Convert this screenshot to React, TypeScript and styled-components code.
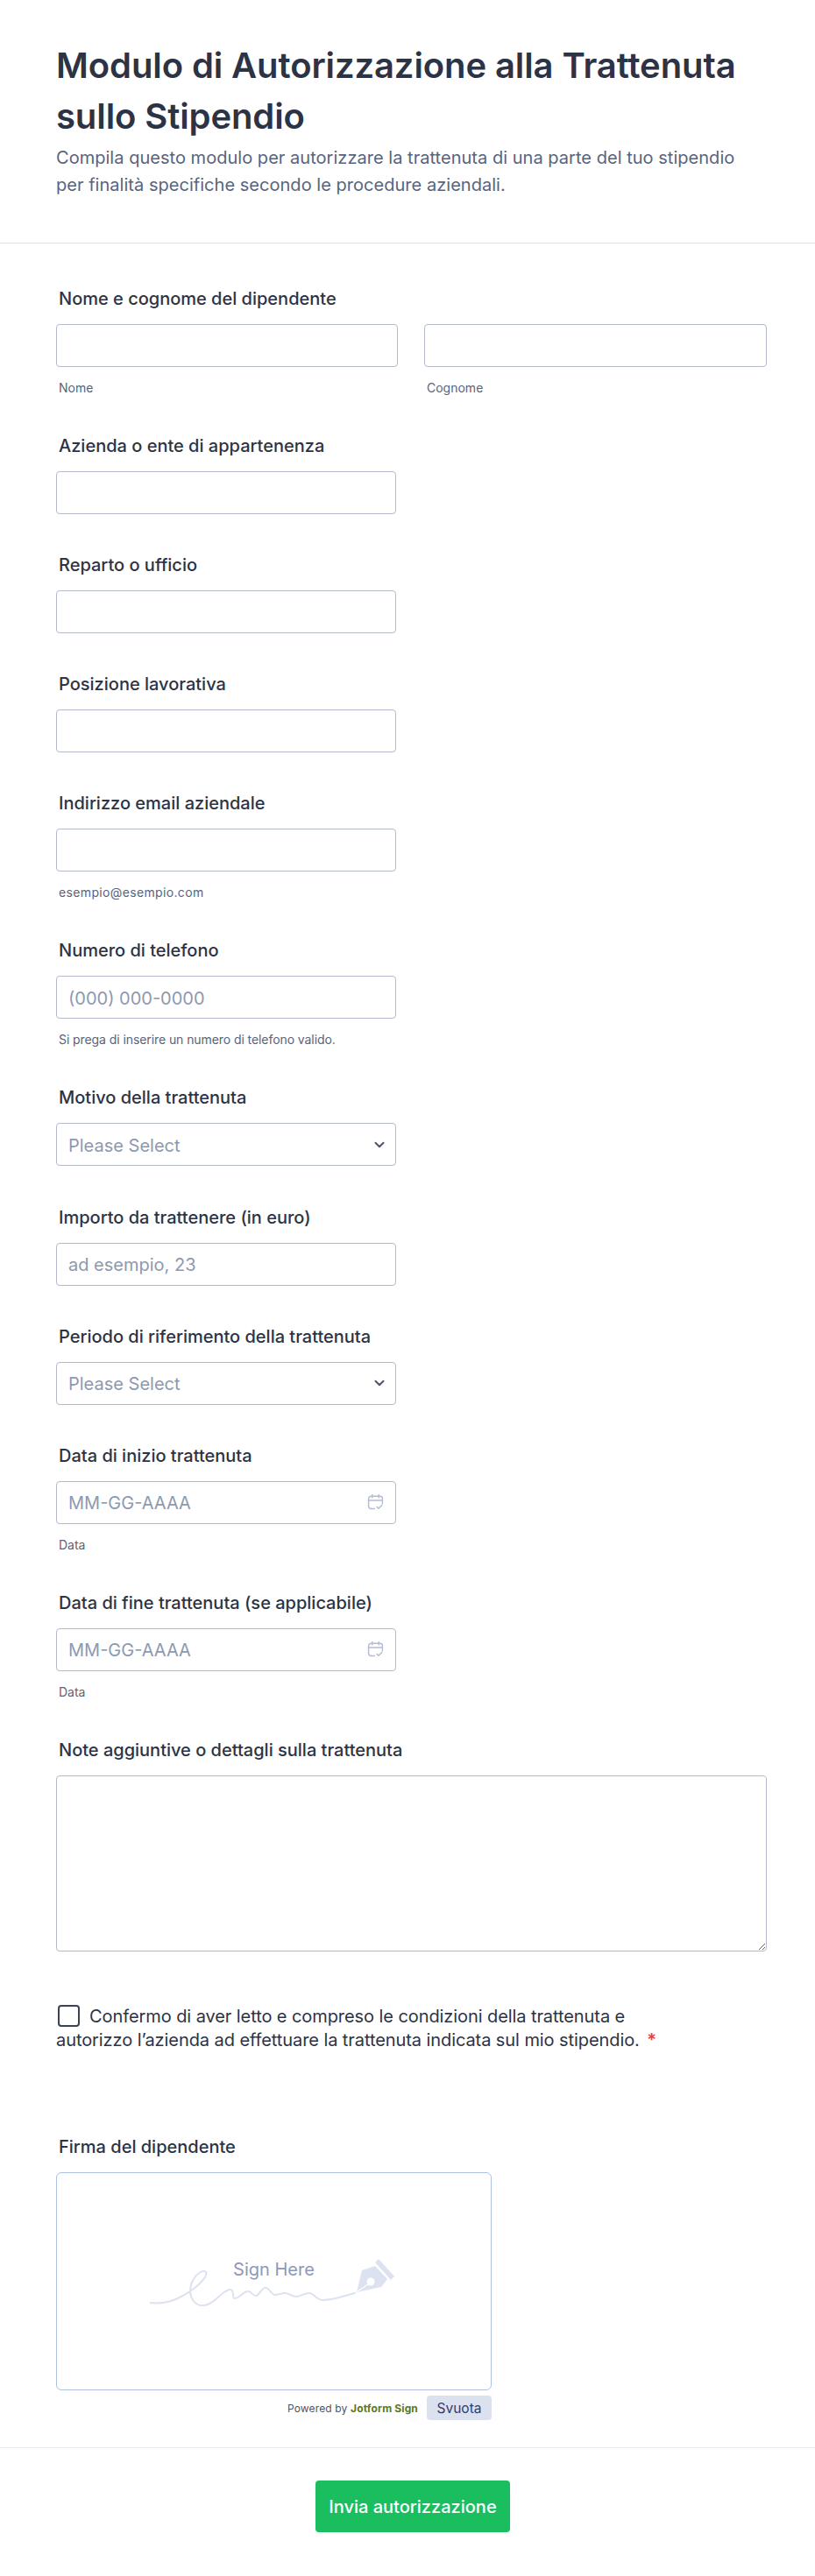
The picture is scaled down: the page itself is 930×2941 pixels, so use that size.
import React from "react"
import styled, { createGlobalStyle } from "styled-components"

const GlobalStyle = createGlobalStyle`
    * {
        box-sizing: border-box;
    }
    html, body {
        margin: 0;
        padding: 0;
        background: #fff;
        font-family: Inter, "Liberation Sans", sans-serif;
    }
`

const Page = styled.form`
    width: 930px;
    height: 2941px;
    background: #fff;
    color: #2c3345;
`

const Header = styled.header`
    padding: 46px 64px 50px;
    border-bottom: 1px solid #dfe2ec;
`

const Title = styled.h1`
    margin: 0;
    font-size: 40px;
    line-height: 58px;
    font-weight: 600;
    letter-spacing: -0.1px;
    color: #2c3345;
`

const Description = styled.p`
    margin: 3px 0 0;
    font-size: 20px;
    line-height: 31px;
    letter-spacing: 0.03px;
    color: #57647e;
`

const Fields = styled.div`
    padding: 52px 64px 0;
    display: flex;
    flex-direction: column;
    gap: 47.08px;
`

const Field = styled.div`
    display: flex;
    flex-direction: column;
`

const Label = styled.label`
    font-size: 20px;
    line-height: 22px;
    font-weight: 500;
    padding-left: 3px;
    margin-bottom: 18px;
    color: #2c3345;
`

const NameRow = styled.div`
    display: grid;
    grid-template-columns: 390px 391px;
    column-gap: 30px;
`

const Input = styled.input`
    display: block;
    width: 100%;
    height: 49px;
    padding: 2px 13px 0;
    background: #fff;
    border: 1px solid #b4bac9;
    border-radius: 4px;
    font: 400 20px Inter, sans-serif;
    color: #2c3345;
    &::placeholder {
        color: #8d99b0;
        opacity: 1;
    }
`

const ControlBox = styled.div`
    position: relative;
    width: 388px;
`

const Select = styled.select`
    display: block;
    width: 100%;
    height: 49px;
    padding: 2px 13px 0;
    background: #fff;
    border: 1px solid #b4bac9;
    border-radius: 4px;
    font: 400 20px Inter, sans-serif;
    color: #8d99b0;
    appearance: none;
`

const ControlIcon = styled.svg<{ $right: number }>`
    position: absolute;
    top: 50%;
    right: ${({ $right }) => $right}px;
    transform: translateY(-50%);
    pointer-events: none;
`

const Sublabel = styled.span<{ $spacing?: number }>`
    display: block;
    margin-top: 16px;
    padding-left: 3px;
    font-size: 14px;
    line-height: 16px;
    letter-spacing: ${({ $spacing }) => $spacing || 0}px;
    color: #57647e;
`

const Textarea = styled.textarea`
    display: block;
    width: 811px;
    height: 201px;
    padding: 12px 13px;
    background: #fff;
    border: 1px solid #b4bac9;
    border-radius: 4px;
    font: 400 20px Inter, sans-serif;
`

const Consent = styled.label`
    display: block;
    width: 700px;
    margin-top: 14px;
    margin-bottom: 50px;
    font-size: 20px;
    line-height: 27px;
    letter-spacing: -0.08px;
    color: #2c3345;
`

const Check = styled.input`
    appearance: none;
    display: inline-block;
    vertical-align: middle;
    width: 25px;
    height: 25px;
    margin: -3px 11px 0 2px;
    background: #fff;
    border: 2px solid #3a4256;
    border-radius: 4px;
`

const Required = styled.span`
    color: #f23a3c;
    font-weight: 600;
    margin-left: 3px;
`

const SignColumn = styled.div`
    width: 497px;
`

const SignPad = styled.div`
    position: relative;
    height: 249px;
    display: flex;
    align-items: center;
    justify-content: center;
    border: 1px solid #adc2e0;
    border-radius: 6px;
    background: #fff;
`

const SignHint = styled.span`
    position: absolute;
    top: 96px;
    left: 0;
    right: 0;
    text-align: center;
    font-size: 20px;
    line-height: 28px;
    color: #8d99b8;
`

const SignArt = styled.svg`
    margin: 5px 0 0 -3px;
`

const SignFooter = styled.div`
    display: flex;
    align-items: center;
    justify-content: flex-end;
    gap: 10px;
    margin-top: 6px;
`

const Powered = styled.span`
    font-size: 12px;
    letter-spacing: 0.15px;
    color: #4b5468;
`

const Brand = styled.b`
    font-weight: 700;
    color: #5a7a1e;
`

const ClearButton = styled.button`
    width: 74px;
    height: 28px;
    padding: 0;
    background: #dbe1ef;
    border: 0;
    border-radius: 4px;
    font: 400 15.5px Inter, sans-serif;
    color: #343c6a;
`

const Footer = styled.footer`
    margin-top: 31px;
    padding-top: 37px;
    border-top: 1px solid #e6eaf3;
    display: flex;
    justify-content: center;
`

const Submit = styled.button`
    width: 222px;
    height: 59px;
    margin-left: 12px;
    background: #1bbe5e;
    border: 0;
    border-radius: 4px;
    font: 500 20px Inter, sans-serif;
    color: #fff;
`

const Chevron = () => (
    <ControlIcon $right={12} width="14" height="14" viewBox="0 0 14 14" fill="none">
        <path d="M2.5 4.8 7 9.2l4.5-4.4" stroke="#4b5468" strokeWidth="2" strokeLinecap="round" strokeLinejoin="round" />
    </ControlIcon>
)

const CalendarIcon = () => (
    <ControlIcon $right={14} width="19" height="19" viewBox="0 0 18 18" fill="none">
        <path
            d="M8 16H4a2.5 2.5 0 0 1-2.500-2.500V5A2.500 2.500 0 0 1 4 2.500h10A2.500 2.500 0 0 1 16.500 5v6M1.500 7h15M5.500 1v3M12.500 1v3M10.500 14l1.800 1.800 3.500-3.500"
            stroke="#b5bcd0"
            strokeWidth="1.4"
            strokeLinecap="round"
            strokeLinejoin="round"
        />
    </ControlIcon>
)

const Signature = () => (
    <SignArt width="280" height="56" viewBox="0 0 280 56" fill="none">
        <path
            d="M0 50C10 51 22 50 32 45 42 40 50 35 57 28 62 23 66 18 64 15 61 12 54 16 50 23 45 31 45 41 49 47 53 53 60 55 68 51 77 47 84 35 92 35 97 35 93 45 97 45 102 45 107 37 112 37 117 37 116 42 121 42 125 42 127 33 132 33 137 33 138 41 143 41 147 41 150 39 154 39 159 39 162 43 167 43 172 43 176 39 182 39 187 39 190 47 197 47 210 47 222 42 234 39"
            stroke="#dde2f0"
            strokeWidth="2"
            strokeLinecap="round"
        />
        <path d="M236 38 242 13 257 8 271 23 264 32Z" fill="#dde2f0" />
        <path d="M257 4 261 0 279 20 275 24Z" fill="#dde2f0" />
        <circle cx="252" cy="26" r="4.500" fill="#fff" />
        <path d="M237 37 249 29" stroke="#fff" strokeWidth="1.400" />
    </SignArt>
)

const TextField = ({
    label,
    placeholder,
    hint,
    hintSpacing,
}: {
    label: string
    placeholder?: string
    hint?: string
    hintSpacing?: number
}) => (
    <Field>
        <Label>{label}</Label>
        <ControlBox>
            <Input placeholder={placeholder} />
        </ControlBox>
        {hint && <Sublabel $spacing={hintSpacing}>{hint}</Sublabel>}
    </Field>
)

const SelectField = ({ label }: { label: string }) => (
    <Field>
        <Label>{label}</Label>
        <ControlBox>
            <Select>
                <option>Please Select</option>
            </Select>
            <Chevron />
        </ControlBox>
    </Field>
)

const DateField = ({ label }: { label: string }) => (
    <Field>
        <Label>{label}</Label>
        <ControlBox>
            <Input placeholder="MM-GG-AAAA" />
            <CalendarIcon />
        </ControlBox>
        <Sublabel>Data</Sublabel>
    </Field>
)

const App: React.FC = () => {
    return (
        <Page>
            <GlobalStyle />
            <Header>
                <Title>Modulo di Autorizzazione alla Trattenuta sullo Stipendio</Title>
                <Description>
                    Compila questo modulo per autorizzare la trattenuta di una parte del tuo stipendio per finalità
                    specifiche secondo le procedure aziendali.
                </Description>
            </Header>
            <Fields>
                <Field>
                    <Label>Nome e cognome del dipendente</Label>
                    <NameRow>
                        <div>
                            <Input />
                            <Sublabel>Nome</Sublabel>
                        </div>
                        <div>
                            <Input />
                            <Sublabel>Cognome</Sublabel>
                        </div>
                    </NameRow>
                </Field>
                <TextField label="Azienda o ente di appartenenza" />
                <TextField label="Reparto o ufficio" />
                <TextField label="Posizione lavorativa" />
                <TextField label="Indirizzo email aziendale" hint="esempio@esempio.com" hintSpacing={0.35} />
                <TextField
                    label="Numero di telefono"
                    placeholder="(000) 000-0000"
                    hint="Si prega di inserire un numero di telefono valido."
                    hintSpacing={-0.08}
                />
                <SelectField label="Motivo della trattenuta" />
                <TextField label="Importo da trattenere (in euro)" placeholder="ad esempio, 23" />
                <SelectField label="Periodo di riferimento della trattenuta" />
                <DateField label="Data di inizio trattenuta" />
                <DateField label="Data di fine trattenuta (se applicabile)" />
                <Field>
                    <Label>Note aggiuntive o dettagli sulla trattenuta</Label>
                    <Textarea />
                </Field>
                <Consent>
                    <Check type="checkbox" />
                    Confermo di aver letto e compreso le condizioni della trattenuta e autorizzo l’azienda ad effettuare
                    la trattenuta indicata sul mio stipendio. <Required>*</Required>
                </Consent>
                <Field>
                    <Label>Firma del dipendente</Label>
                    <SignColumn>
                        <SignPad>
                            <SignHint>Sign Here</SignHint>
                            <Signature />
                        </SignPad>
                        <SignFooter>
                            <Powered>
                                Powered by <Brand>Jotform Sign</Brand>
                            </Powered>
                            <ClearButton type="button">Svuota</ClearButton>
                        </SignFooter>
                    </SignColumn>
                </Field>
            </Fields>
            <Footer>
                <Submit type="button">Invia autorizzazione</Submit>
            </Footer>
        </Page>
    )
}

export default App
